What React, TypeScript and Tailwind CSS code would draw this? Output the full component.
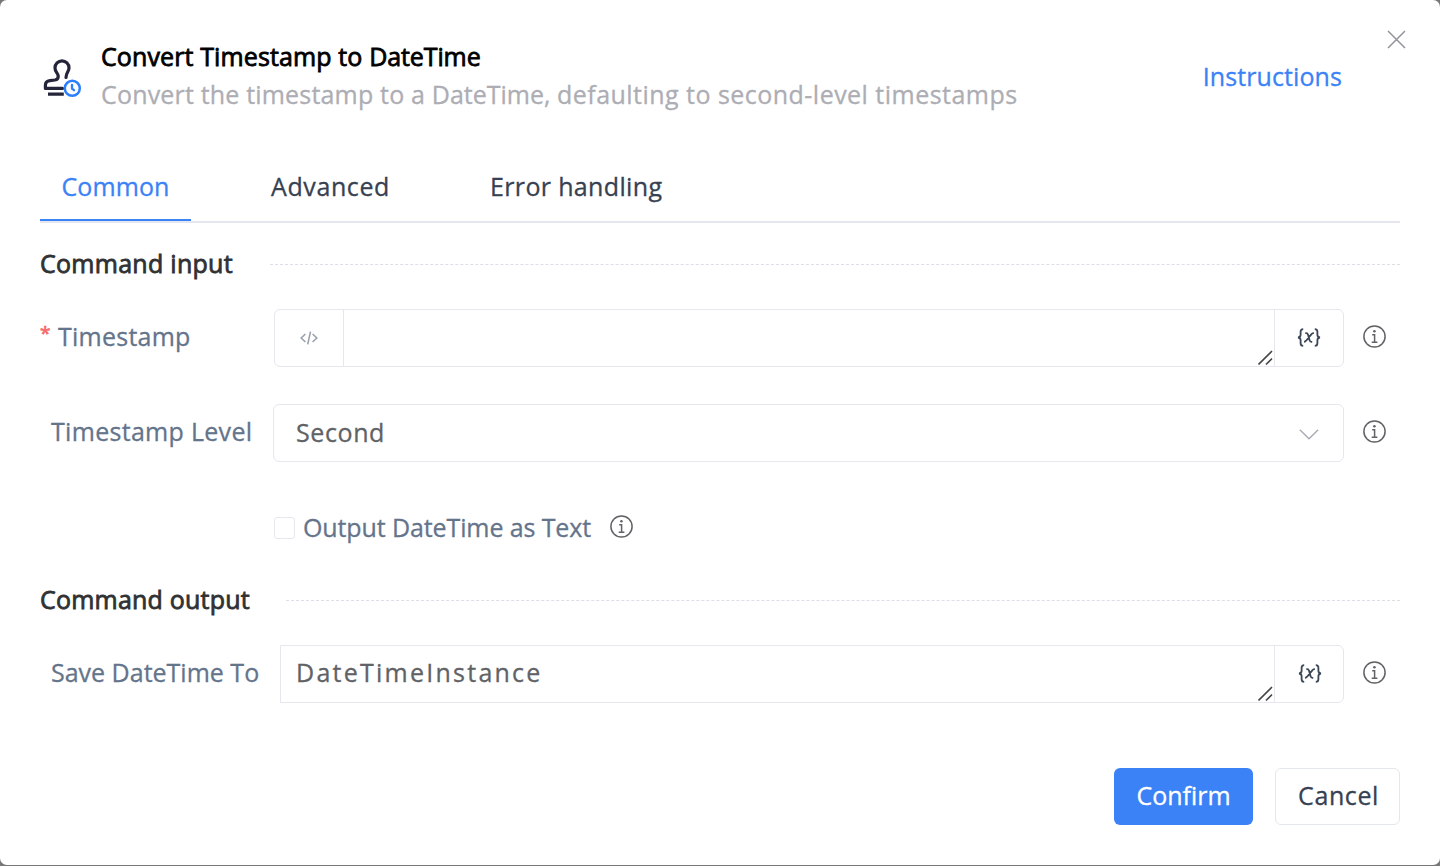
import type { ReactNode } from "react";

function StampIcon() {
  return (
    <svg width="42" height="42" viewBox="0 0 42 42" fill="none" strokeLinecap="round" strokeLinejoin="round">
      <g stroke="#24243a" strokeWidth="3.200">
        <path d="M22.500 32.400H5.400v-3.200c0-2.800 1.600-4.200 4.500-4.600l5-.6c2.500-.4 3.500-1.800 3.300-4.200-.2-2.600-3.200-4-3.200-7.900a7 7 0 0 1 14 0c0 3.600-3 4.800-3 9.500" />
        <path d="M8 38.200h15.800" strokeLinecap="butt" />
      </g>
      <circle cx="32.300" cy="32.300" r="7.500" stroke="#2b7fff" strokeWidth="2.500" />
      <path d="M32 28.800v3.800l2 1.600" stroke="#2b7fff" strokeWidth="2.300" />
    </svg>
  );
}

function InfoIcon() {
  return (
    <svg className="shrink-0" width="23" height="23" viewBox="0 0 23 23" fill="none" stroke="#606266" strokeWidth="1.500">
      <circle cx="11.500" cy="11.500" r="10.600" />
      <circle cx="11.400" cy="6.200" r="1.300" fill="#606266" stroke="none" />
      <path d="M9.200 9.800h2.400v7.400M8.700 17.300h5.700" />
    </svg>
  );
}

function VariableIcon() {
  return (
    <svg width="24" height="20" viewBox="0 0 24 20" fill="none" stroke="#3b4657" strokeWidth="1.800">
      <path d="M6.200 1.200C4 1.200 3.600 2 3.600 3.800v3c0 1.700-.7 2.500-2.600 2.700 1.900.2 2.600 1 2.600 2.700v3c0 1.800.4 2.600 2.600 2.600" />
      <path d="M17.800 1.200c2.200 0 2.600.8 2.600 2.600v3c0 1.700.7 2.500 2.600 2.700-1.900.2-2.600 1-2.600 2.700v3c0 1.800-.4 2.600-2.600 2.600" />
      <path d="M8.300 5.200h1c1 0 1.400.5 1.700 1.500l1.600 5.600c.3 1 .7 1.500 1.600 1.500h1M16.900 5.200h-.6c-.9 0-1.500.5-2.200 1.400l-4.600 5.700c-.7.900-1.300 1.500-2.500 1.500" />
    </svg>
  );
}

function CodeIcon() {
  return (
    <svg className="mb-px mr-px" width="18" height="14" viewBox="0 0 18 14" fill="none" stroke="#9aa1ad" strokeWidth="1.600">
      <path d="M5.400 3 1.200 7l4.200 4M12.600 3l4.200 4-4.200 4M10.500.6 7.700 13.400" />
    </svg>
  );
}

function Resizer() {
  return (
    <svg className="absolute bottom-0 right-0" width="16" height="16" viewBox="0 0 16 16" fill="none" stroke="#444" strokeWidth="1.600">
      <path d="M.5 14.500 14 1M8 14.500l6-6" />
    </svg>
  );
}

function Section({ children, title }: { children: ReactNode; title: ReactNode }) {
  return (
    <section>
      <div className="flex h-[38px] items-center">
        {title}
        <div className="mt-[3px] flex-1 border-t border-dashed border-[#dcdfe6]" />
      </div>
      {children}
    </section>
  );
}

function InfoSlot() {
  return (
    <div className="ml-[19px] pt-4">
      <InfoIcon />
    </div>
  );
}

export default function App() {
  return (
    <div className="h-[866px] w-[1440px] bg-[#777] font-['Open_Sans',sans-serif] text-[25px] leading-[38px] text-[#606266] [-webkit-text-stroke-width:0.3px]">
      <div className="relative h-[865px] overflow-hidden rounded-[7px] bg-white px-10 pt-[37px]">
        <button className="absolute right-[34px] top-[30px]" aria-label="Close">
          <svg width="19" height="19" viewBox="0 0 19 19" stroke="#909399" strokeWidth="1.500">
            <path d="m1 1 17 17M18 1 1 18" />
          </svg>
        </button>

        <header className="flex h-[76px] items-center">
          <div className="mt-[3px] w-[61px]">
            <StampIcon />
          </div>
          <div className="flex-1 whitespace-nowrap">
            <h1 className="text-black [-webkit-text-stroke-width:0.8px]"><span className="tracking-[0.12px]">Convert Timestamp to </span><span className="tracking-[-0.1px]">DateTime</span></h1>
            <p className="text-[#adadb4]"><span className="tracking-[0.18px]">Convert the timestamp to a </span><span>DateTime, </span><span className="tracking-[0.47px]">defaulting to second-level timestamps</span></p>
          </div>
          <a className="mr-[58px] mt-0.5 tracking-[0.1px] text-[#3b82f6]">Instructions</a>
        </header>

        <nav className="mt-10 flex border-b-2 border-[#e4e7ed] text-[#374151]">
          <div className="h-[68px] w-[151px] border-b-2 border-[#3b82f6] pl-[21.5px] pt-[14px] tracking-[0.1px] text-[#3b82f6]">Common</div>
          <div className="ml-20 w-[119px] pt-[14px] tracking-[0.6px]">Advanced</div>
          <div className="ml-[100px] pt-[14px] tracking-[0.35px]">Error handling</div>
        </nav>

        <main className="pt-[21px]">
          <Section title={<h2 className="w-[230px] tracking-[0.28px] text-[#303133] [-webkit-text-stroke-width:0.8px]">Command input</h2>}>
            <div className="mt-[27px] flex h-[58px]">
              <label className="flex w-[234px] pt-2 tracking-[0.25px] text-[#64748b]">
                <span className="w-[18px] text-[19px] leading-[32px] text-[#f56c6c] [-webkit-text-stroke-width:0.7px]">*</span>Timestamp
              </label>
              <div className="flex w-[1070px] rounded-md border border-[#e4e7ed]">
                <div className="flex w-[69px] items-center justify-center border-r border-[#e4e7ed]"><CodeIcon /></div>
                <div className="relative flex-1"><Resizer /></div>
                <div className="flex w-[69px] items-center justify-center border-l border-[#e4e7ed]"><VariableIcon /></div>
              </div>
              <InfoSlot />
            </div>

            <div className="mt-[37px] flex h-[58px]">
              <label className="w-[233px] pl-[11px] pt-2 tracking-[0.3px] text-[#64748b]">Timestamp Level</label>
              <div className="flex w-[1071px] justify-between rounded-md border border-[#e4e7ed] pl-[22px] pr-6">
                <span className="pt-2 tracking-[0.6px]">Second</span>
                <svg className="mt-6" width="20" height="11" viewBox="0 0 20 11" fill="none" stroke="#a8abb2" strokeWidth="1.400">
                  <path d="m.8.8 9.200 9 9.200-9" />
                </svg>
              </div>
              <InfoSlot />
            </div>

            <div className="mt-[46px] flex pl-[234px]">
              <span className="mt-[9px] h-[22px] w-[21px] rounded-[3px] border border-[#e4e7ed]" />
              <span className="ml-2 w-[307px] tracking-[-0.11px] text-[#64748b]">Output DateTime as Text</span>
              <div className="pt-[7px]"><InfoIcon /></div>
            </div>
          </Section>

          <div className="mt-[34px]">
            <Section title={<h2 className="w-[246px] tracking-[0.21px] text-[#303133] [-webkit-text-stroke-width:0.8px]">Command output</h2>}>
              <div className="mt-[27px] flex h-[58px]">
                <label className="w-[240px] pl-[11px] pt-2 text-[#64748b]">Save DateTime To</label>
                <div className="flex w-[1064px] rounded-r-md border border-[#e4e7ed]">
                  <div className="relative flex-1 pl-[15px] pt-[7px] tracking-[2.25px]">
                    DateTimeInstance
                    <Resizer />
                  </div>
                  <div className="flex w-[69px] items-center justify-center border-l border-[#e4e7ed] pl-px"><VariableIcon /></div>
                </div>
                <InfoSlot />
              </div>
            </Section>
          </div>
        </main>

        <footer className="mt-[65px] flex justify-end">
          <button className="h-[57px] w-[139px] rounded-md bg-[#3b82f6] pb-[3px] text-white">Confirm</button>
          <button className="ml-[22px] h-[57px] w-[125px] rounded-md border border-[#e4e7ed] pb-[3px] pl-0.5 tracking-[0.6px] text-[#374151]">Cancel</button>
        </footer>
      </div>
    </div>
  );
}
